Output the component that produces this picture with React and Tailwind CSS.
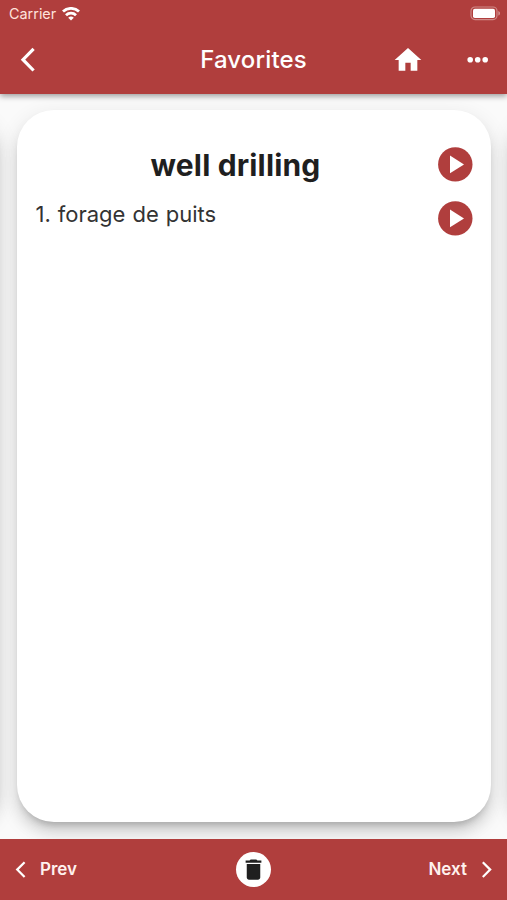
const PlayButton = () => (
  <button type="button" aria-label="Play" className="block h-[35px] w-[35px]">
    <svg viewBox="0 0 35 35" className="h-full w-full">
      <circle cx="17.3" cy="17.4" r="17.2" fill="#b03e3d" />
      <path d="M12 8.6v17.6l14-8.8z" fill="#fff" />
    </svg>
  </button>
);

const StatusBar = () => (
  <div className="flex h-[26px] items-center justify-between pl-[9px] pr-[6px] pt-px">
    <div className="flex items-center gap-[6px]">
      <span className="pt-px text-[14.4px] leading-none text-[#ffe3dc]">Carrier</span>
      <svg viewBox="0 0 18 14" className="h-[14px] w-[18px]" fill="none" stroke="#fff" strokeWidth="2.8">
        <path d="M1 4.6a11.5 11.5 0 0 1 16 0" />
        <path d="M4 8.2a7.2 7.2 0 0 1 10 0" />
        <path d="M9 13.5 6.2 10.8a4 4 0 0 1 5.6 0z" fill="#fff" stroke="none" />
      </svg>
    </div>
    <svg viewBox="0 0 31 15" className="h-[15px] w-[31px]">
      <rect x="1" y="1" width="26" height="12.6" rx="4" fill="none" stroke="#cf8a88" strokeWidth="1.2" />
      <rect x="3" y="2.8" width="22" height="9.2" rx="1.8" fill="#fff" />
      <path d="M28.4 5v4.6c2-.8 2-3.8 0-4.6z" fill="#d79c9a" />
    </svg>
  </div>
);

const Header = () => (
  <header className="relative z-10 h-[94px] shrink-0 bg-[#b03e3d] text-white shadow-[0_2px_6px_rgba(0,0,0,0.4)]">
    <StatusBar />
    <div className="grid h-[67px] grid-cols-[1fr_auto_1fr] items-center">
      <button type="button" aria-label="Back" className="ml-[20px] w-[16px]">
        <svg viewBox="0 0 16 26" className="h-[26px] w-[16px]" fill="none" stroke="#fff" strokeWidth="3.2">
          <path d="M13.6 1.9 3 12.7l10.6 10.8" />
        </svg>
      </button>
      <h1 className="pt-px text-[24px] font-medium leading-none tracking-[0.15px]">Favorites</h1>
      <div className="flex items-center justify-end gap-[43px] pr-[18px]">
        <svg viewBox="0 0 24 24" className="h-[32px] w-[32px]" fill="#fff">
          <path d="M10 20v-6h4v6h5v-8h3L12 3 2 12h3v8z" />
        </svg>
        <svg viewBox="0 0 22 6" className="h-[6px] w-[22px]" fill="#fff">
          <circle cx="3.2" cy="2.8" r="2.8" />
          <circle cx="10.7" cy="2.8" r="2.8" />
          <circle cx="18.2" cy="2.8" r="2.8" />
        </svg>
      </div>
    </div>
  </header>
);

const Card = ({ children }) => (
  <section className="h-[712px] w-[474px] shrink-0 rounded-[37px] bg-white px-[18px] pt-[37px] shadow-[0_7px_7px_-4px_rgba(0,0,0,0.2),0_11px_14px_0px_rgba(0,0,0,0.1),0_7px_20px_4px_rgba(0,0,0,0.07)]">
    {children}
  </section>
);

const Footer = () => (
  <footer className="relative z-10 grid h-[61px] shrink-0 grid-cols-3 items-center bg-[#b03e3d] px-[15px] text-[17px] font-semibold text-[#fff1ee]">
    <button type="button" className="flex items-center gap-[14px]">
      <svg viewBox="0 0 11 18" className="h-[18px] w-[11px]" fill="none" stroke="#fff" strokeWidth="2.2">
        <path d="M9.6 1.2 2.2 8.6 9.6 16" />
      </svg>
      Prev
    </button>
    <button type="button" aria-label="Delete" className="flex h-[35px] w-[35px] items-center justify-center justify-self-center rounded-full bg-white">
      <svg viewBox="0 0 24 24" className="h-[27px] w-[27px]" fill="#1f1f1f">
        <path d="M6 19c0 1.1.9 2 2 2h8c1.1 0 2-.9 2-2V7H6v12zM19 4h-3.5l-1-1h-5l-1 1H5v2h14z" />
      </svg>
    </button>
    <button type="button" className="flex items-center justify-end gap-[14px]">
      Next
      <svg viewBox="0 0 11 18" className="h-[18px] w-[11px]" fill="none" stroke="#fff" strokeWidth="2.2">
        <path d="M1.8 1.2 9.2 8.6 1.8 16" />
      </svg>
    </button>
  </footer>
);

const App = () => {
  const word = "well drilling";
  const translations = ["forage de puits"];

  return (
    <div className="flex h-screen w-full flex-col overflow-hidden bg-[#fafafa] font-[Inter,sans-serif]">
      <Header />
      <main className="flex flex-1 justify-center gap-[18px] overflow-hidden pt-[16px]">
        <Card />
        <Card>
          <div className="flex items-center">
            <h2 className="flex-1 pr-px pt-px text-center text-[30px] font-bold leading-[34px] tracking-[0.15px] text-[#1f1f1f]">
              {word}
            </h2>
            <PlayButton />
          </div>
          {translations.map((text, i) => (
            <div key={text} className="mt-[19px] flex justify-between pl-px">
              <p className="text-[22px] leading-[27px] [word-spacing:0.8px] text-[#333]">
                {i + 1}. {text}
              </p>
              <PlayButton />
            </div>
          ))}
        </Card>
        <Card />
      </main>
      <Footer />
    </div>
  );
};

export default App;
